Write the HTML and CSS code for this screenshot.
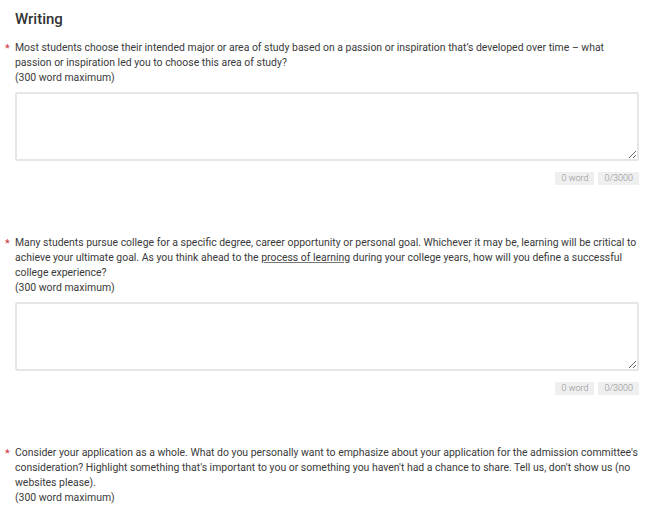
FILE: index.html
```html
<!DOCTYPE html>
<html lang="en">
<head>
  <meta charset="UTF-8">
  <title>Writing</title>
  <link rel="stylesheet" href="styles.css">
</head>
<body>
  <section class="writing">
    <h2>Writing</h2>

    <div class="question">
      <p class="prompt"><span class="req">*</span>Most students choose their intended major or area of study based on a passion or inspiration that’s developed over time – what passion or inspiration led you to choose this area of study?<br>(300 word maximum)</p>
      <textarea class="answer"></textarea>
      <div class="counters">
        <span class="count">0 word</span>
        <span class="count">0/3000</span>
      </div>
    </div>

    <div class="question">
      <p class="prompt"><span class="req">*</span>Many students pursue college for a specific degree, career opportunity or personal goal. Whichever it may be, learning will be critical to achieve your ultimate goal. As you think ahead to the <span class="link">process of learning</span> during your college years, how will you define a successful college experience?<br>(300 word maximum)</p>
      <textarea class="answer"></textarea>
      <div class="counters">
        <span class="count">0 word</span>
        <span class="count">0/3000</span>
      </div>
    </div>

    <div class="question">
      <p class="prompt"><span class="req">*</span>Consider your application as a whole. What do you personally want to emphasize about your application for the admission committee's consideration? Highlight something that's important to you or something you haven't had a chance to share. Tell us, don't show us (no websites please).<br>(300 word maximum)</p>
    </div>
  </section>
</body>
</html>
```

FILE: styles.css
```css
body {
  margin: 0;
  font-family: Roboto, "Liberation Sans", sans-serif;
  background-color: #fff;
  color: #333;
}
.writing {
  padding: 9px 11px 0 15px;
}
h2 {
  margin: 0 0 11px;
  font-size: 15px;
  font-weight: 500;
  line-height: 20px;
  color: #333;
}
.question {
  margin-bottom: 50px;
}
.prompt {
  position: relative;
  margin: 0 -2px 0 0;
  font-size: 10.45px;
  line-height: 15px;
  color: #3a3a3a;
}
.link {
  text-decoration: underline;
  text-decoration-color: #777;
}
.req {
  position: absolute;
  left: -10px;
  top: 1px;
  color: #d0343d;
  font-size: 11px;
}
.answer {
  display: block;
  width: 100%;
  height: 69px;
  margin-top: 7px;
  box-sizing: border-box;
  border: 2px solid #e6e6e6;
  border-radius: 2px;
  resize: vertical;
  font-family: inherit;
}
.counters {
  display: flex;
  justify-content: flex-end;
  gap: 4px;
  margin-top: 11px;
}
.count {
  background-color: #efefef;
  color: #8f8f8f;
  font-size: 9px;
  font-weight: 300;
  line-height: 13px;
  padding: 0 6px;
}
```
